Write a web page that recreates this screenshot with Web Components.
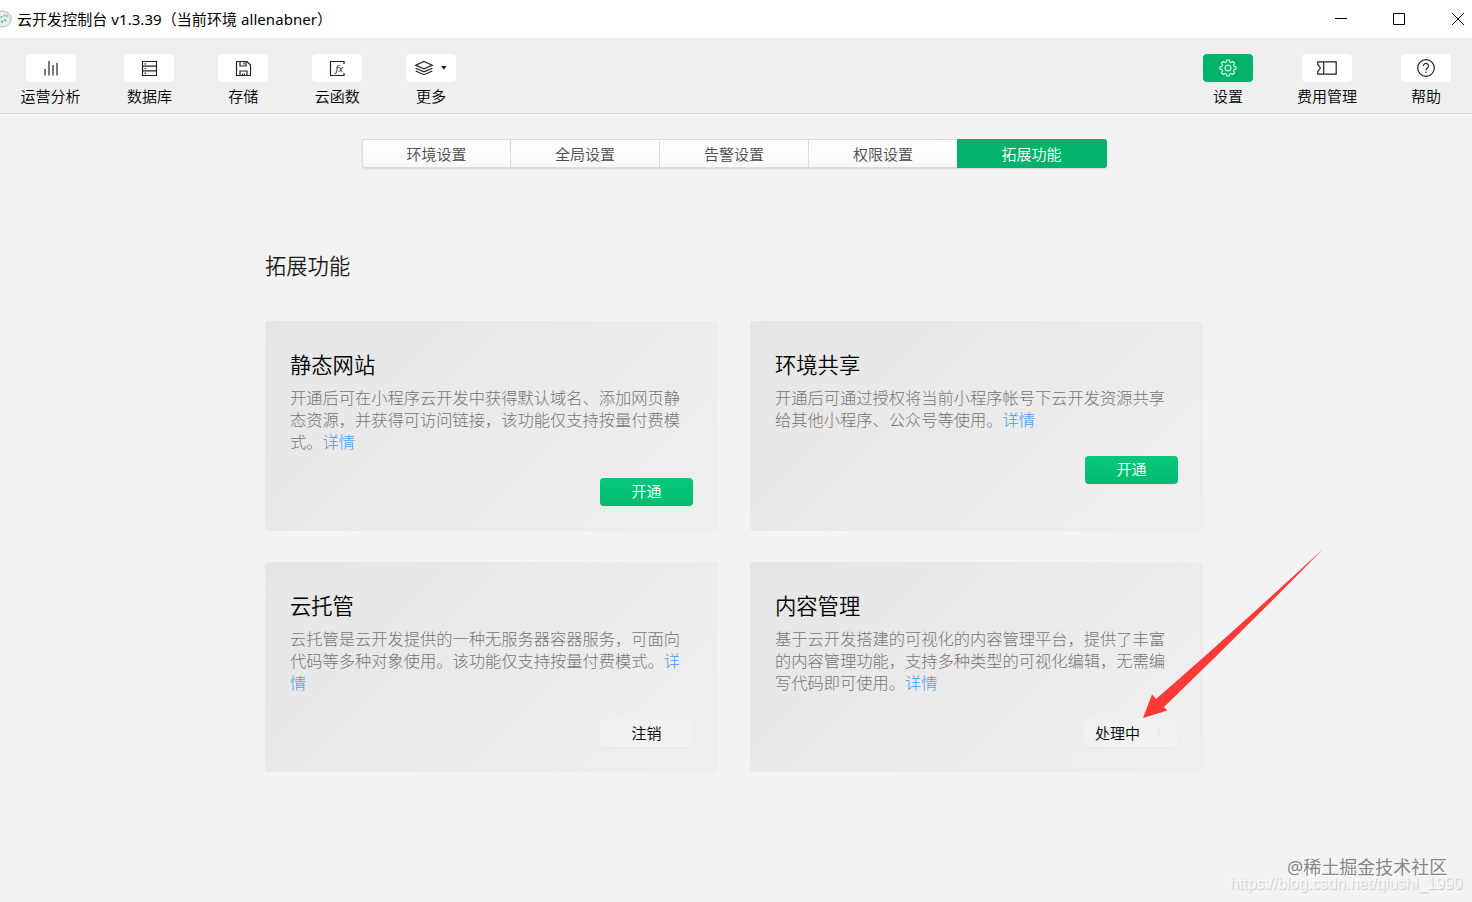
<!DOCTYPE html>
<html lang="zh-CN">
	<head>
		<meta charset="UTF-8"/>
		<title>云开发控制台</title>
		<style>
			html, body{
				margin: 0;
				height: 100%;
			}
			body{
				background: #f3f3f3;
				color: #000;
				font: 350 15px/20px "Noto Sans", "Noto Sans CJK SC", sans-serif;
				overflow: hidden;
			}
		</style>
	</head>
	<body>
		<cloud-console>
			<title-bar slot="title">云开发控制台 v1.3.39（当前环境 allenabner）</title-bar>

			<tool-item slot="left" icon="chart">运营分析</tool-item>
			<tool-item slot="left" icon="database">数据库</tool-item>
			<tool-item slot="left" icon="disk">存储</tool-item>
			<tool-item slot="left" icon="func">云函数</tool-item>
			<tool-item slot="left" icon="layers">更多</tool-item>
			<tool-item slot="right" icon="gear" active>设置</tool-item>
			<tool-item slot="right" icon="ticket">费用管理</tool-item>
			<tool-item slot="right" icon="help">帮助</tool-item>

			<tab-bar>
				<tab-item>环境设置</tab-item>
				<tab-item>全局设置</tab-item>
				<tab-item>告警设置</tab-item>
				<tab-item>权限设置</tab-item>
				<tab-item active>拓展功能</tab-item>
			</tab-bar>

			<feature-section heading="拓展功能">
				<feature-card heading="静态网站">
					开通后可在小程序云开发中获得默认域名、添加网页静态资源，并获得可访问链接，该功能仅支持按量付费模式。
					<push-button slot="action" primary>开通</push-button>
				</feature-card>
				<feature-card heading="环境共享">
					开通后可通过授权将当前小程序帐号下云开发资源共享给其他小程序、公众号等使用。
					<push-button slot="action" primary>开通</push-button>
				</feature-card>
				<feature-card heading="云托管">
					云托管是云开发提供的一种无服务器容器服务，可面向代码等多种对象使用。该功能仅支持按量付费模式。
					<push-button slot="action">注销</push-button>
				</feature-card>
				<feature-card heading="内容管理">
					基于云开发搭建的可视化的内容管理平台，提供了丰富的内容管理功能，支持多种类型的可视化编辑，无需编写代码即可使用。
					<push-button slot="action" loading>处理中</push-button>
				</feature-card>
			</feature-section>
		</cloud-console>
		<red-arrow></red-arrow>
		<water-mark></water-mark>

		<script type="text/javascript">
			const ICONS = {
				chart: `<svg width="16" height="18" viewBox="0 0 16 18"><path d="M2 10v6.500M6 2v14.500M10 6v10.500M14 4v12.500"/></svg>`,
				database: `<svg width="18" height="18" viewBox="0 0 18 18"><path d="M2.500 2.500h14v14h-14zM2.500 7.200h14M2.500 11.800h14M4.500 4.900h1.600M4.500 9.500h1.600M4.500 14.100h1.600"/></svg>`,
				disk: `<svg width="18" height="18" viewBox="0 0 18 18"><path d="M2.500 2.500H13L16.500 6v10.500h-14zM6 2.500V7h6V2.500M10 3.500v2M6 16.500V12h7v4.500M8.500 14.500v2M10.500 14.500v2"/></svg>`,
				func: `<svg width="18" height="18" viewBox="0 0 18 18"><path d="M16 5V2.500H2.500v14H16V14"/><text x="7.500" y="12.800">fx</text></svg>`,
				layers: `<svg width="34" height="18" viewBox="0 0 34 18"><path d="M10 2.500l8.300 3.700L10 9.900 1.700 6.200zM1.700 9.200l8.300 3.700 8.300-3.700M1.700 12l8.300 3.700 8.300-3.700"/><path class="solid" d="M27 7h5.600l-2.800 3.800z"/></svg>`,
				gear: `<svg width="18" height="18" viewBox="0 0 18 18"><path d="M7.800 1h2.400l.4 1.900 1.500.6 1.700-1 1.700 1.700-1 1.700.6 1.500 1.900.4v2.400l-1.900.4-.6 1.500 1 1.700-1.700 1.700-1.700-1-1.500.6-.4 1.900H7.800l-.4-1.900-1.500-.6-1.700 1-1.700-1.700 1-1.700-.6-1.500L1 10.200V7.800l1.900-.4.6-1.500-1-1.700 1.700-1.700 1.700 1 1.500-.6z"/><circle cx="9" cy="9" r="2.900"/></svg>`,
				ticket: `<svg width="20" height="16" viewBox="0 0 20 16"><path d="M.8 1.800h18.400v12.400H.8v-3a1.300 1.300 0 0 0 1.200-1.300c0-.9 1.400-1.100 1.400-1.900S2 7 2 6.100A1.300 1.300 0 0 0 .8 4.800zM6.700 1.800v12.400"/></svg>`,
				help: `<svg width="20" height="20" viewBox="0 0 20 20"><circle cx="10" cy="10" r="8.300"/><path d="M7.500 8a2.500 2.500 0 1 1 3.900 2c-.9.600-1.400 1-1.400 2.200M10 13.400v1.500"/></svg>`
			}

			class BaseElement extends HTMLElement{
				constructor(){
					super()
					this.attachShadow({mode: 'open'})
				}

				connectedCallback(){
					this.shadowRoot.innerHTML = this.template
				}
			}

			class CloudConsole extends BaseElement{
				get template(){
					return `
						<style>
							:host{ display: flex; flex-direction: column; height: 902px; }
							header{
								display: flex;
								justify-content: space-between;
								box-sizing: border-box;
								height: 76px;
								padding: 16px 21px 0 20.500px;
								background: #efefef;
								border-bottom: 1px solid #d5d5d5;
							}
							nav{ display: flex; gap: 44px; }
							nav:first-child{ gap: 43.900px; }
							main{ display: flex; flex-direction: column; flex: 1; padding-top: 25px; }
						</style>
						<slot name="title"></slot>
						<header>
							<nav><slot name="left"></slot></nav>
							<nav><slot name="right"></slot></nav>
						</header>
						<main><slot></slot></main>
					`
				}
			}

			class TitleBar extends BaseElement{
				get template(){
					return `
						<style>
							:host{ display: flex; align-items: center; height: 38px; background: #fff; }
							.logo{ flex: none; margin: 0 5px 1px -8px; }
							.text{ flex: 1; white-space: nowrap; letter-spacing: .06px; font-weight: 400; }
							.controls{ display: flex; gap: 46px; padding-right: 8px; }
							.controls svg{ fill: none; stroke: #000; }
							.controls svg:not(:last-child){ margin: 0 1px 0 -1px; }
						</style>
						<svg class="logo" width="20" height="18" viewBox="0 0 20 18">
							<ellipse cx="10.500" cy="9" rx="8.700" ry="8" fill="#e8eeeb" stroke="#b3b8b5"/>
							<path d="M8.500 6.500l1.500 1M12 9.500l2 1.500M14.500 5.500l1.500 1M9 11l2 1.500M12 5l1 1" fill="none" stroke="#67c29a" stroke-width="2"/>
						</svg>
						<span class="text"><slot></slot></span>
						<div class="controls">
							<svg width="12" height="12"><path d="M0 5.500h12"/></svg>
							<svg width="12" height="12"><path d="M.5.5h11v11H.5z"/></svg>
							<svg width="12" height="12"><path d="M0 0l12 12M12 0L0 12"/></svg>
						</div>
					`
				}
			}

			class ToolItem extends BaseElement{
				get template(){
					return `
						<style>
							:host{ display: flex; flex-direction: column; align-items: center; min-width: 50px; white-space: nowrap; }
							.box{
								display: flex;
								align-items: center;
								justify-content: center;
								width: 50px;
								height: 28px;
								margin-bottom: 4px;
								border-radius: 4px;
								background: #fff;
							}
							:host([active]) .box{ background: #03b26b; }
							svg{ fill: none; stroke: #222; stroke-width: 1.2; }
							:host([active]) svg{ stroke: #c9f3df; }
							.solid{ fill: #222; stroke: none; }
							text{ font: italic 9.500px "Noto Sans", sans-serif; fill: #222; stroke: none; }
						</style>
						<div class="box">${ICONS[this.getAttribute('icon')]}</div>
						<slot></slot>
					`
				}
			}

			class TabBar extends BaseElement{
				get template(){
					return `
						<style>
							:host{
								display: grid;
								grid-template: 29px / 148px 149px 149px 149px 150px;
								align-self: center;
								width: 745px;
								height: 29px;
								margin-right: 3px;
								border-radius: 3px;
								box-shadow: 0 1px 2px rgba(0,0,0,.12);
							}
						</style>
						<slot></slot>
					`
				}
			}

			class TabItem extends BaseElement{
				get template(){
					return `
						<style>
							:host{
								box-sizing: border-box;
								border: 1px solid #dcdcdc;
								border-right: 0;
								background: linear-gradient(#fff, #f8f8f8);
								color: #4c4c4c;
								text-align: center;
								line-height: 28px;
							}
							:host(:first-child){ border-radius: 3px 0 0 3px; }
							:host([active]){
								padding-right: 2px;
								border-color: #03b26b;
								border-radius: 0 3px 3px 0;
								background: #03b26b;
								color: #fff;
							}
						</style>
						<slot></slot>
					`
				}
			}

			class FeatureSection extends BaseElement{
				get template(){
					return `
						<style>
							:host{ display: block; width: 938px; margin: 82px 0 0 265px; }
							h2{ margin: 0 0 40px; color: #1c1c1c; font-size: 21.300px; font-weight: 350; line-height: 31px; }
							.grid{ display: grid; grid-template-columns: 1fr 1fr; gap: 31px 32px; }
						</style>
						<h2>${this.getAttribute('heading')}</h2>
						<div class="grid"><slot></slot></div>
					`
				}
			}

			class FeatureCard extends BaseElement{
				get template(){
					return `
						<style>
							:host{
								display: flex;
								flex-direction: column;
								box-sizing: border-box;
								min-height: 210px;
								padding: 28px 25px 24px;
								border-radius: 4px;
								background: linear-gradient(135deg, #e6e6e6, #efefef);
							}
							h3{ margin: 0 0 7px; font-size: 21.300px; font-weight: 350; line-height: 31px; }
							p{ margin: 0 0 25px; color: #757575; font-size: 16.260px; font-weight: 300; line-height: 22px; }
							a{ color: #459cf0; }
							.action{ display: flex; justify-content: flex-end; }
						</style>
						<h3>${this.getAttribute('heading')}</h3>
						<p><slot></slot><a>详情</a></p>
						<div class="action"><slot name="action"></slot></div>
					`
				}

				connectedCallback(){
					//indentation after the sentence would show up as a space before the link
					for(const node of this.childNodes){
						if(node.nodeType === Node.TEXT_NODE) node.data = node.data.trim()
					}
					super.connectedCallback()
				}
			}

			class PushButton extends BaseElement{
				get template(){
					return `
						<style>
							:host{
								display: flex;
								align-items: center;
								justify-content: center;
								box-sizing: border-box;
								width: 93px;
								height: 28px;
								padding-bottom: 2px;
								border-radius: 4px;
								background: #f1f1f1;
								box-shadow: 0 1px 1px rgba(0,0,0,.03);
							}
							:host([primary]){ background: linear-gradient(#05c77b, #05bb70); color: #fff; }
							:host(:not([primary])){ padding: 0; }
							:host([loading]){ width: 94px; margin-right: 1px; }
							svg{ margin: 0 3px 0 8px; }
						</style>
						<slot></slot>
						${this.hasAttribute('loading') ? `<svg width="14" height="14"><path d="M9 2a6 6 0 0 1 1 9" fill="none" stroke="#e2e2e2"/></svg>` : ''}
					`
				}
			}

			class RedArrow extends BaseElement{
				get template(){
					return `
						<style>
							:host{ position: absolute; left: 1142px; top: 548px; pointer-events: none; }
							svg{ display: block; }
						</style>
						<svg width="182" height="172"><path d="M1 170L10 146.500L14 151Q92 83 181 1Q105 79 22 159L25.300 162.500Z" fill="#fd3a38"/></svg>
					`
				}
			}

			class WaterMark extends BaseElement{
				get template(){
					return `
						<style>
							:host{ position: absolute; left: 1230px; top: 856px; width: 236px; height: 40px; white-space: nowrap; }
							.site, .url{ position: absolute; }
							.site{ left: 57px; top: 0; font-size: 18px; font-weight: 400; line-height: 23px; color: #858585; text-shadow: 1px 1px 0 #fff; }
							.url{ left: 0; top: 19px; font: 15.900px/18px "Liberation Sans", sans-serif; color: #f8f8f8; text-shadow: 1px 1px 1px #c6c6c6; }
						</style>
						<span class="url">https://blog.csdn.net/qiushi_1990</span>
						<span class="site">@稀土掘金技术社区</span>
					`
				}
			}

			window.customElements.define("cloud-console", CloudConsole)
			window.customElements.define("title-bar", TitleBar)
			window.customElements.define("tool-item", ToolItem)
			window.customElements.define("tab-bar", TabBar)
			window.customElements.define("tab-item", TabItem)
			window.customElements.define("feature-section", FeatureSection)
			window.customElements.define("feature-card", FeatureCard)
			window.customElements.define("push-button", PushButton)
			window.customElements.define("red-arrow", RedArrow)
			window.customElements.define("water-mark", WaterMark)
		</script>
	</body>
</html>
